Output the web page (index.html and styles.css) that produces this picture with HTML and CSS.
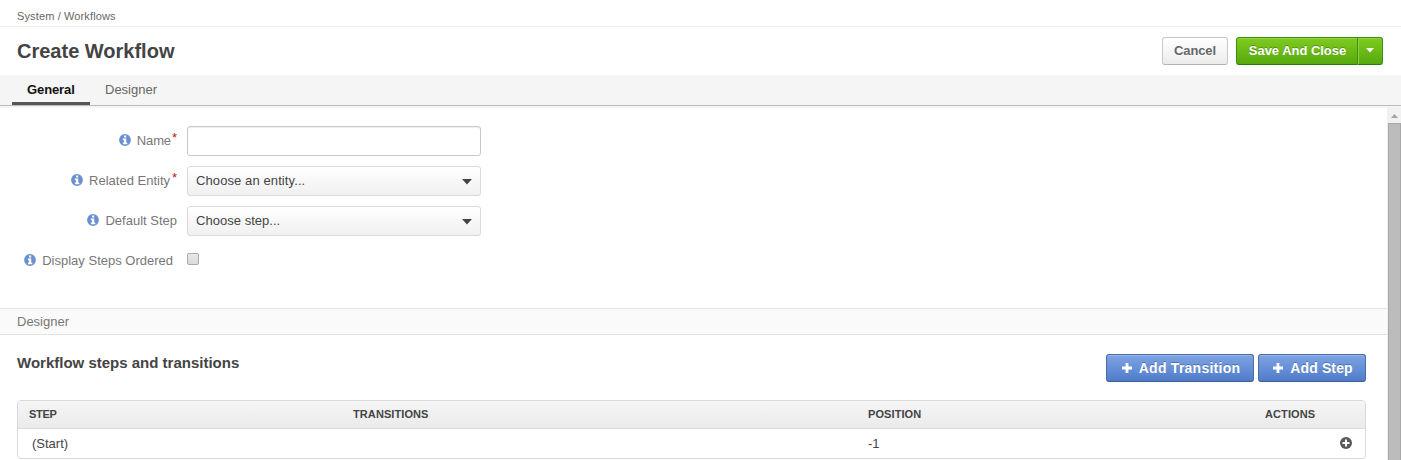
FILE: index.html
```html
<!DOCTYPE html>
<html lang="en">
<head>
<meta charset="utf-8">
<title>Create Workflow</title>
<link rel="stylesheet" href="styles.css">
</head>
<body>
<svg class="defs" aria-hidden="true">
  <symbol id="info" viewBox="0 0 12 12"><path fill="currentColor" fill-rule="evenodd" d="M6 0.1a5.900 5.900 0 1 0 0 11.800a5.900 5.900 0 0 0 0-11.800zM5 1.600h2.200v1.900h-2.200zM3.900 4.600h3.300v4h1.100v1.600h-4.400v-1.600h1.100V6.200h-1.100z"/></symbol>
  <symbol id="plus" viewBox="0 0 10 10"><path fill="currentColor" d="M3.600 0h2.800v3.600h3.600v2.800h-3.600v3.600h-2.800v-3.600h-3.600v-2.800h3.600z"/></symbol>
  <symbol id="caret" viewBox="0 0 10 6"><path fill="currentColor" d="M0 0h10l-5 5.500z"/></symbol>
</svg>
<nav class="breadcrumb"><span>System / Workflows</span></nav>
<header class="header">
  <h1 class="title">Create Workflow</h1>
  <div class="actions">
    <button class="btn cancel">Cancel</button>
    <div class="split">
      <button class="btn save">Save And Close</button>
      <button class="btn toggle" aria-label="More"><svg class="toggle-caret"><use href="#caret"/></svg></button>
    </div>
  </div>
</header>
<div class="tabs">
  <a class="tab active"><span>General</span></a>
  <a class="tab"><span>Designer</span></a>
</div>
<div class="viewport">
  <main class="content">
    <form class="form">
      <div class="row">
        <label class="label"><svg class="info"><use href="#info"/></svg><span class="t-name">Name</span><em class="req">*</em></label>
        <input class="field" type="text">
      </div>
      <div class="row">
        <label class="label"><svg class="info"><use href="#info"/></svg><span class="t-entity">Related Entity</span><em class="req">*</em></label>
        <div class="field select"><span class="t-choose">Choose an entity...</span><svg class="select-caret"><use href="#caret"/></svg></div>
      </div>
      <div class="row">
        <label class="label"><svg class="info"><use href="#info"/></svg><span class="t-default">Default Step</span></label>
        <div class="field select"><span class="t-step">Choose step...</span><svg class="select-caret"><use href="#caret"/></svg></div>
      </div>
      <div class="row">
        <label class="label ordered"><svg class="info"><use href="#info"/></svg><span class="t-display">Display Steps Ordered</span></label>
        <span class="checkbox" role="checkbox" aria-checked="false"></span>
      </div>
    </form>
    <h2 class="section">Designer</h2>
    <section class="designer">
      <div class="toolbar">
        <h3 class="subtitle">Workflow steps and transitions</h3>
        <div class="tools">
          <button class="btn primary transition"><svg class="plus"><use href="#plus"/></svg><span>Add Transition</span></button>
          <button class="btn primary step"><svg class="plus"><use href="#plus"/></svg><span>Add Step</span></button>
        </div>
      </div>
      <div class="grid">
        <div class="grid-row head"><span class="h-step">Step</span><span class="h-tr">Transitions</span><span class="h-pos">Position</span><span class="h-act">Actions</span></div>
        <div class="grid-row"><span class="start">(Start)</span><span></span><span>-1</span>
          <svg class="add" viewBox="0 0 12 12"><circle cx="6" cy="6" r="6" fill="#5a5a5a"/><path d="M6 2.500v7M2.500 6h7" stroke="#fff" stroke-width="2"/></svg>
        </div>
      </div>
    </section>
  </main>
  <div class="scrollbar"><svg class="up" viewBox="0 0 7 4"><path d="M3.500 0l3.500 4h-7z" fill="#a3a3a3"/></svg><div class="thumb"></div></div>
</div>
</body>
</html>
```
FILE: styles.css
```css
* { box-sizing: border-box; }
body { margin: 0; width: 1401px; height: 460px; overflow: hidden; display: flex; flex-direction: column; background: #fff; color: #444; font: 13px/20px "Liberation Sans", Arial, sans-serif; }
h1, h2, h3 { margin: 0; }
span, label, h1, h2, h3 { white-space: nowrap; }
.defs { display: none; }
.breadcrumb { height: 27px; padding: 6px 17px 0; border-bottom: 1px solid #f0f0f0; font-size: 11px; letter-spacing: .13px; color: #666; }
.header { height: 48px; padding: 0 18px 0 17px; display: flex; justify-content: space-between; align-items: center; }
.title { font-size: 20px; line-height: 24px; font-weight: bold; }
.actions { display: flex; gap: 8px; margin-bottom: 1px; }
.btn { height: 28px; margin: 0; padding: 0; border-radius: 3px; font: bold 13px/20px "Liberation Sans", Arial, sans-serif; display: flex; align-items: center; justify-content: center; white-space: nowrap; }
.cancel { width: 66px; color: #666; border: 1px solid #c8c8c8; border-bottom-color: #b3b3b3; background: linear-gradient(#fff, #ececec); text-shadow: 0 1px 0 #fff; letter-spacing: -.1px; }
.split { display: flex; }
.save, .toggle { color: #fff; border: 1px solid #3d8f12; border-bottom-color: #2e7a0a; background: linear-gradient(#7fcb1f, #56a90e); box-shadow: inset 0 1px 0 #91d33f; text-shadow: 0 -1px 0 rgba(0,0,0,.25); }
.save { width: 122px; padding-left: 1px; border-radius: 3px 0 0 3px; letter-spacing: -.03px; }
.toggle { width: 25px; border-left: 0; border-radius: 0 3px 3px 0; box-shadow: inset 1px 1px 0 #91d33f; }
.toggle-caret { width: 8px; height: 5px; }
.tabs { height: 31px; padding-left: 12px; display: flex; background: #f5f5f5; border-bottom: 1px solid #bbb; }
.tab { height: 30px; padding: 5px 15px 0; color: #666; }
.active { width: 78px; font-weight: bold; color: #111; border-bottom: 3px solid #555; letter-spacing: -.1px; }
.viewport { flex: 1; display: flex; border-top: 2px solid #f5f5f5; }
.content { width: 1387px; }
.form { height: 200px; padding-top: 18px; display: flex; flex-direction: column; gap: 10px; }
.row { height: 30px; display: flex; gap: 10px; }
.label { width: 177px; height: 30px; display: flex; align-items: center; justify-content: flex-end; color: #777; padding-bottom: 1px; }
.ordered { padding-right: 4px; }
.info { width: 12px; height: 12px; margin: 0 6px 1px 0; color: #6a90d0; }
.t-name { margin-right: -1px; letter-spacing: -.1px; }
.req { align-self: flex-start; width: 5px; margin: 2px 0 0 2px; font-style: normal; color: #b5181b; }
.field { width: 294px; height: 30px; border: 1px solid #c8c8c8; border-radius: 3px; padding: 0 8px; background: #fff; box-shadow: inset 0 1px 1px rgba(0,0,0,.07); }
.select { display: flex; align-items: center; justify-content: space-between; padding-bottom: 1px; border-color: #d9d9d9; background: linear-gradient(#fff, #f0f0f0); box-shadow: none; }
.t-choose { letter-spacing: .1px; }
.t-step { letter-spacing: .03px; }
.select-caret { width: 10px; height: 6px; margin-top: 2px; color: #444; }
.checkbox { width: 12px; height: 12px; margin-top: 7px; border: 1px solid #aaa; border-radius: 2px; background: linear-gradient(#e8e8e8, #dadada); }
.section { height: 27px; padding: 3px 17px 0; font-size: 13px; line-height: 20px; font-weight: normal; color: #777; background: #fafafa; border: solid #e2e2e2; border-width: 1px 0; }
.designer { padding: 19px 21px 0 17px; }
.toolbar { height: 46px; display: flex; justify-content: space-between; align-items: flex-start; }
.subtitle { font-size: 15px; line-height: 18px; }
.tools { display: flex; gap: 4px; }
.primary { padding-left: 2px; color: #fff; font-size: 14px; gap: 7px; border: 1px solid #4a6ca3; border-bottom-color: #3f5f92; background: linear-gradient(#7ea4e3, #4f7dca); box-shadow: inset 0 1px 0 #95b5ea; text-shadow: 0 -1px 0 rgba(0,0,0,.25); }
.transition { width: 148px; letter-spacing: .25px; }
.step { width: 108px; letter-spacing: .15px; }
.plus { width: 10px; height: 10px; }
.grid { height: 59px; border: 1px solid #d9d9d9; border-radius: 4px; overflow: hidden; }
.grid-row { height: 29px; padding: 0 11px; display: grid; grid-template-columns: 324px 515px 397px 1fr; align-items: center; }
.head { height: 28px; padding-bottom: 1px; background: linear-gradient(#f5f5f5, #ebebeb); border-bottom: 1px solid #d9d9d9; font-size: 11px; font-weight: bold; text-transform: uppercase; letter-spacing: .09px; }
.h-step { letter-spacing: -.3px; }
.start { padding-left: 3px; }
.add { width: 12px; height: 12px; justify-self: end; margin: 0 2px 1px 0; }
.scrollbar { width: 14px; padding: 6px 0 0 1px; background: #f1f1f1; display: flex; flex-direction: column; align-items: center; gap: 5px; }
.up { width: 7px; height: 4px; }
.thumb { flex: 1; width: 13px; background: #bcbcbc; border: 1px solid #a8a8a8; border-bottom: 0; }
```
